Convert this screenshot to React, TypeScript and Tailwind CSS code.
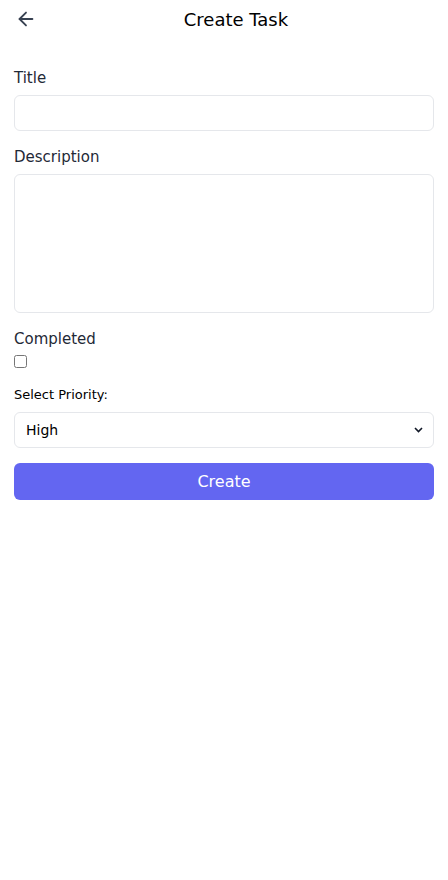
import { useState } from 'react';
import { ArrowLeft } from 'lucide-react';

export default function App() {
  const [title, setTitle] = useState('');
  const [description, setDescription] = useState('');
  const [completed, setCompleted] = useState(false);
  const [priority, setPriority] = useState('high');

  return (
    <div className="min-h-screen bg-white text-[#111827]" style={{ fontFamily: '"DejaVu Sans", "Noto Sans", sans-serif' }}>
      <header className="relative flex h-[38px] items-center justify-center pl-[24px]">
        <button type="button" className="absolute left-[15px] top-[8px] text-[#374151]" aria-label="Back">
          <ArrowLeft className="h-[22px] w-[22px]" strokeWidth={2} />
        </button>
        <h1 className="text-[18px] font-normal text-black">Create Task</h1>
      </header>

      <form className="px-[14px] pt-[29px]" onSubmit={(e) => e.preventDefault()}>
        <label className="block text-[15px] leading-[22px] text-[#1f2937] mb-[6px]">Title</label>
        <input
          value={title}
          onChange={(e) => setTitle(e.target.value)}
          className="block h-[36px] w-full rounded-md border border-[#e5e7eb] px-3 text-sm outline-none"
        />

        <label className="mt-[15px] mb-[6px] block text-[15px] leading-[22px] text-[#1f2937]">Description</label>
        <textarea
          value={description}
          onChange={(e) => setDescription(e.target.value)}
          className="block h-[139px] w-full resize-none rounded-md border border-[#e5e7eb] px-3 py-2 text-sm outline-none"
        />

        <label className="mt-[15px] block text-[15px] leading-[22px] text-[#1f2937]">Completed</label>
        <div className="mt-[4px] flex h-[14px] items-center">
          <input
            type="checkbox"
            checked={completed}
            onChange={(e) => setCompleted(e.target.checked)}
            className="m-0 h-[13px] w-[13px]"
          />
        </div>

        <label className="mt-[18px] mb-[8px] block text-[13px] leading-[18px] text-black">Select Priority:</label>
        <div className="relative">
          <select
            value={priority}
            onChange={(e) => setPriority(e.target.value)}
            className="block h-[36px] w-full appearance-none rounded-md border border-[#e5e7eb] bg-white pl-[11px] pr-8 text-[14px] text-black outline-none"
          >
            <option value="high">High</option>
            <option value="medium">Medium</option>
            <option value="low">Low</option>
          </select>
          <svg
            className="pointer-events-none absolute right-[11px] top-[15px] h-[6px] w-[9px]"
            viewBox="0 0 9 6"
            fill="none"
            stroke="#111827"
            strokeWidth="1.6"
          >
            <path d="M1 1l3.5 3.5L8 1" />
          </svg>
        </div>

        <button
          type="submit"
          className="mt-[15px] flex h-[37px] w-full items-center justify-center rounded-md bg-[#6366f1] text-[16px] text-white"
        >
          Create
        </button>
      </form>
    </div>
  );
}
